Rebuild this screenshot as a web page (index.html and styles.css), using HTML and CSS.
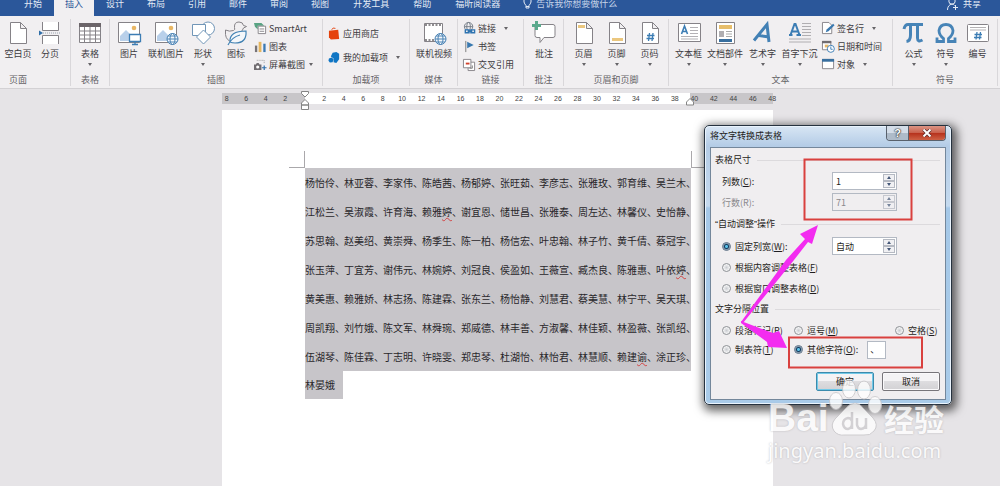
FILE: index.html
```html
<!DOCTYPE html>
<html lang="zh-CN">
<head>
<meta charset="utf-8">
<title>将文字转换成表格</title>
<link rel="stylesheet" href="styles.css">
</head>
<body>
<div class="app">
<nav class="tabs">
  <button class="tab">开始</button><button class="tab active">插入</button><button class="tab">设计</button><button class="tab">布局</button><button class="tab">引用</button><button class="tab">邮件</button><button class="tab">审阅</button><button class="tab">视图</button><button class="tab wide">开发工具</button><button class="tab">帮助</button><button class="tab wide">福昕阅读器</button>
  <button class="tell"><svg width="9" height="12" viewBox="0 0 9 12"><path d="M1 1v3q.5 2 2 3.500v2.500h3V7.500Q7.500 6 8 4V1M3 8.500h3" class="ln-w"/></svg>告诉我你想要做什么</button>
  <button class="share"><svg width="13" height="13" viewBox="0 0 13 13"><circle cx="6" cy="3" r="3.200" class="ln-w"/><path d="M1.500 12q0-5 4.500-6 2 .5 2.500 1.500M7 9.500h5M9.500 7v5" class="ln-w"/></svg>共享</button>
</nav>

<div class="ribbon">
  <section class="group first">
    <div class="tools">
      <button class="big w36"><svg class="ic" viewBox="0 0 24 24"><path d="M4.500 1.500h10l6 6v15h-16zM14.500 1.500v6h6" class="pg"/></svg><span>空白页</span></button>
      <button class="big w28"><svg class="ic" viewBox="0 0 24 24"><path d="M4.500 1v8.500h16V1M4.500 23v-8.500h16V23" class="pg"/><path d="M1 9.500v5l4-2.500z" fill="#2f6ea8"/><path d="M5 12h17" stroke="#9aa4b0" stroke-dasharray="1 1"/></svg><span>分页</span></button>
    </div>
    <h2>页面</h2>
  </section>
  <section class="group">
    <div class="tools">
      <button class="big w36"><svg class="ic" viewBox="0 0 24 24"><path d="M1.500 2.500h21v19h-21zM1.500 10h21M1.500 14h21M1.500 18h21M6.500 6v15M12 6v15M17.500 6v15" class="pg"/><path d="M1 2h22v4H1z" fill="#6b6569"/></svg><span>表格</span><i class="caret"></i></button>
    </div>
    <h2>表格</h2>
  </section>
  <section class="group">
    <div class="tools">
      <button class="big w36"><svg class="ic" viewBox="0 0 24 24"><path d="M1.500 1.500h21v20h-21z" class="pg"/><path d="M3 20v-5l6-6 5 5v6z" fill="#b9d0ea"/><circle cx="17" cy="7" r="2.300" fill="#e9b765"/><path d="M12.500 13.500h11v7h-11zM18 21v2M15 23.500h6" fill="#fff" stroke="#3c7db4" stroke-width="1.300"/></svg><span>图片</span></button>
      <button class="big w38"><svg class="ic" viewBox="0 0 24 24"><path d="M1.500 1.500h21v20h-21z" class="pg"/><path d="M3 20v-5l6-6 5 5v6z" fill="#b9d0ea"/><circle cx="17" cy="7" r="2.300" fill="#e9b765"/><g class="globe"><circle cx="18.500" cy="18" r="5.500"/><ellipse cx="18.500" cy="18" rx="2.500" ry="5.500"/><path d="M13 18h11M14 15h9M14 21h9"/></g></svg><span>联机图片</span></button>
      <button class="big w36"><svg class="ic" viewBox="0 0 24 24"><circle cx="17" cy="7.500" r="6.500" class="bl"/><path d="M1.500 3.500h13v11h-13z" class="bl"/><path d="M12.500 9l7 7-7 7-7-7z" class="bl"/></svg><span>形状</span><i class="caret"></i></button>
      <button class="big w30"><svg class="ic" viewBox="0 0 24 24"><path d="M1.500 9q4 2 8 .5 2-.8 1-3Q10 1 15 1q4 0 4.500 3.500l3 1-3 1.500q-1 2-2 3.500 4 1 3.500 6-1 4-5 5H9q-7-2-7.500-8z" class="pgn"/><path d="M6 21Q5 10 22 10q1 12-11 12-3 0-5-1zm-2 3q4-8 12-10" fill="#f4f7fa" stroke="#4283b4" stroke-width="1.200"/></svg><span>图标</span></button>
      <div class="stack">
        <button class="small"><svg class="si" viewBox="0 0 14 14"><path d="M0 1h8l3 3H4v4L1 5z" fill="#58a383"/><path d="M4.500 4.500h8v8h-8zM6 7.500h5M6 10h5" class="pg"/></svg>SmartArt</button>
        <button class="small"><svg class="si" viewBox="0 0 14 14"><path d="M1 6h2.500v7H1z" fill="#787478"/><path d="M5 2h3v11H5z" fill="#e5b55d"/><path d="M10 4h2.500v9H10z" fill="#3b79b3"/></svg>图表</button>
        <button class="small"><svg class="si" viewBox="0 0 14 14"><path d="M3 2.500h8v4" fill="none" stroke="#999" stroke-dasharray="1 1"/><path d="M0 7h2l1-1.500h2L6 7h2v6H0z" fill="#716d71"/><circle cx="4" cy="9.700" r="1.700" fill="#fff"/><path d="M11 8v5M8.500 10.500h5" stroke="#2f70ac" stroke-width="1.300"/></svg>屏幕截图<i class="caret"></i></button>
      </div>
    </div>
    <h2>插图</h2>
  </section>
  <section class="group">
    <div class="tools">
      <div class="stack two">
        <button class="small"><svg class="si" viewBox="0 0 14 14"><path d="M1 4l10-1 1 10-9 .5L1 11z" fill="#e5420d"/><path d="M4 3q1-3 4-1.500" stroke="#e5420d" fill="none"/></svg>应用商店</button>
        <button class="small"><svg class="si" viewBox="0 0 14 14"><path d="M5 2l4-1 3 2v6l-3 4-3-1V8L3 6z" fill="#0f75c4"/><path d="M1 8l3-1 2 2-1 3-3 .5-1.500-2z" fill="#0f75c4"/></svg>我的加载项<i class="caret far"></i></button>
      </div>
    </div>
    <h2>加载项</h2>
  </section>
  <section class="group">
    <div class="tools center">
      <button class="big w38"><svg class="ic" viewBox="0 0 24 24"><path d="M2.500 2.500h18v18h-18z" class="pg"/><path d="M3 4h17M3 19h17" stroke="#6b676b" stroke-width="1.500" stroke-dasharray="2 1.500"/><g class="globe"><circle cx="18.500" cy="18" r="5.500"/><ellipse cx="18.500" cy="18" rx="2.500" ry="5.500"/><path d="M13 18h11M14 15h9M14 21h9"/></g></svg><span>联机视频</span></button>
    </div>
    <h2>媒体</h2>
  </section>
  <section class="group">
    <div class="tools">
      <div class="stack links">
        <button class="small"><svg class="si" viewBox="0 0 14 14"><g fill="none" stroke="#737b85"><circle cx="6" cy="5" r="4.500"/><ellipse cx="6" cy="5" rx="2" ry="4.500"/><path d="M1.500 5h9"/></g><path d="M2.500 8.500h4v3h-4zM8.500 8.500h4v3h-4zM5 10h5" fill="#f1eff1" stroke="#2e73b0" stroke-width="1.500"/></svg>链接<i class="caret far"></i></button>
        <button class="small"><svg class="si" viewBox="0 0 14 14"><path d="M3 1v12" stroke="#777"/><path d="M4.500 2l7 3.500-7 3.500z" fill="#3978af"/></svg>书签</button>
        <button class="small"><svg class="si" viewBox="0 0 14 14"><path d="M5.500 4.500h7v9h-7z" class="pg"/><path d="M.5 1.500h8v9h-8z" class="pg"/><path d="M3 5h4v2H3z" fill="#d1412c"/><path d="M10 8v3H7" stroke="#777" fill="none"/></svg>交叉引用</button>
      </div>
    </div>
    <h2>链接</h2>
  </section>
  <section class="group">
    <div class="tools center">
      <button class="big w36"><svg class="ic" viewBox="0 0 24 24"><path d="M4 3.500h17q2 0 2 2v9q0 2-2 2H12l-4 5v-5H5q-2 0-2-2v-9" class="pg"/><path d="M4.500 0v9M0 4.500h9" stroke="#5ba98d" stroke-width="3"/></svg><span>批注</span></button>
    </div>
    <h2>批注</h2>
  </section>
  <section class="group">
    <div class="tools center">
      <button class="big w33"><svg class="ic" viewBox="0 0 24 24"><path d="M4.500 1.500h10l6 6v15h-16zM14.500 1.500v6h6" class="pg"/><path d="M6 4h7v3H6z" fill="#ebc77f"/></svg><span>页眉</span><i class="caret"></i></button>
      <button class="big w33"><svg class="ic" viewBox="0 0 24 24"><path d="M4.500 1.500h10l6 6v15h-16zM14.500 1.500v6h6" class="pg"/><path d="M7 17h11v3H7z" fill="#ebc77f"/></svg><span>页脚</span><i class="caret"></i></button>
      <button class="big w33"><svg class="ic" viewBox="0 0 24 24"><path d="M4.500 1.500h10l6 6v15h-16zM14.500 1.500v6h6" class="pg"/><path d="M11.500 12l-1 8M15 12l-1 8M9 14.500h7.500M8.500 17.500H16" class="hash"/></svg><span>页码</span><i class="caret"></i></button>
    </div>
    <h2>页眉和页脚</h2>
  </section>
  <section class="group text">
    <div class="tools">
      <button class="big w33"><svg class="ic" viewBox="0 0 24 24"><path d="M1.500 2.500h22v18h-22z" class="pg"/><path d="M4.500 13l3-8 3 8M5.500 10.500h4" fill="none" stroke="#3c7db4" stroke-width="1.600"/><path d="M13 6.500h8M13 9.500h8M13 12.500h8M4 15.500h17M4 18h17" stroke="#b3b1b5"/></svg><span>文本框</span><i class="caret"></i></button>
      <button class="big w40"><svg class="ic" viewBox="0 0 24 24"><path d="M3.500 1.500h18v21h-18z" class="pg"/><path d="M6 4h13v4H6z" fill="#e7be6b"/><path d="M6 10h5v6H6z" fill="#b0aeb1"/><path d="M13 10.500h6M13 13h6M13 15.500h6" stroke="#aaa"/><path d="M6 18h13v3H6z" fill="#386f9f"/></svg><span>文档部件</span><i class="caret"></i></button>
      <button class="big w35"><svg class="ic" viewBox="0 0 24 24"><path d="M3 19.500L16 3.500 18 21M8 14.500l10 1.500" fill="none" stroke="#4381b5" stroke-width="3"/></svg><span>艺术字</span><i class="caret"></i></button>
      <button class="big w39"><svg class="ic" viewBox="0 0 24 24"><path d="M1 14h3.500M8.500 14H13M2.500 14l4-11h1l4 11M4 10.500h6" fill="none" stroke="#3c7db4" stroke-width="2"/><path d="M14 2.500h9M14 5.500h9M14 8.500h9M14 11.500h9M14 14.500h9M1 18h22M1 21h22" stroke="#b0aeb1"/></svg><span>首字下沉</span><i class="caret"></i></button>
      <div class="stack">
        <button class="small"><svg class="si" viewBox="0 0 14 14"><path d="M.5.5h7l3 3v9h-10z" class="pg"/><path d="M4 11l1-3 7-6 1.500 1.500L7 10z" fill="#3978af"/></svg>签名行<i class="caret far"></i></button>
        <button class="small"><svg class="si" viewBox="0 0 14 14"><path d="M.5 1.500h9v9h-9z" class="pg"/><path d="M0 1h10v2.500H0z" fill="#706c70"/><path d="M3 5h4v3H3z" fill="#e9b765"/><circle cx="9.500" cy="9.500" r="3.800" fill="#fff" stroke="#3c7db4"/><path d="M9.500 7v3h2" fill="none" stroke="#3c7db4"/></svg>日期和时间</button>
        <button class="small"><svg class="si" viewBox="0 0 14 14"><path d="M.5 1.500h12v10H.5z" class="pg"/><path d="M0 1h13v3H0z" fill="#386f9f"/></svg>对象<i class="caret far"></i></button>
      </div>
    </div>
    <h2>文本</h2>
  </section>
  <section class="group">
    <div class="tools center">
      <button class="big w32"><svg class="ic" viewBox="0 0 24 24"><path d="M2 8q1-4.500 4-4.500h15" fill="none" stroke="#4784b7" stroke-width="3"/><path d="M8.500 5v9q0 6-4 6.500M15.500 5v12q0 4.500 5 2" fill="none" stroke="#4784b7" stroke-width="3"/></svg><span>公式</span><i class="caret"></i></button>
      <button class="big w32"><svg class="ic" viewBox="0 0 24 24"><path d="M3 16.500v4h6.500v-3Q5 14 5 9.500 6 3.500 12 3.500t7 6q0 4.500-4.500 8v3H21v-4" fill="none" stroke="#4784b7" stroke-width="2.800"/></svg><span>符号</span><i class="caret"></i></button>
      <button class="big w32"><svg class="ic" viewBox="0 0 24 24"><rect x="1.500" y="3.500" width="21" height="17" rx="1" class="pg"/><path d="M4 6.500h16M4 9h16" stroke="#b5b2b5"/><path d="M11 11l-1 7.500M14.500 11l-1 7.500M8.500 13.500H16M8 16.500h7.500" class="hash"/></svg><span>编号</span></button>
    </div>
    <h2>符号</h2>
  </section>
</div>

<main class="workspace">
  <div class="ruler">
    <div class="nums"><span>8</span><span>6</span><span>4</span><span>2</span><span></span><span>2</span><span>4</span><span>6</span><span>8</span><span>10</span><span>12</span><span>14</span><span>16</span><span>18</span><span>20</span><span>22</span><span>24</span><span>26</span><span>28</span><span>30</span><span>32</span><span>34</span><span>36</span><span>38</span><span>40</span><span>42</span><span>44</span><span>46</span><span>48</span></div>
    <svg class="mark left" width="8" height="20" viewBox="0 0 8 20"><path d="M.5.5h7v2L4 6 .5 2.500zM4 8.500l3.500 3.500v2h-7v-2zM.5 14h7v4.500h-7z" fill="#fff" stroke="#858585"/></svg>
    <svg class="mark right" width="8" height="8" viewBox="0 0 8 8"><path d="M4 .5L7.500 4v3h-7V4z" fill="#fff" stroke="#858585"/></svg>
  </div>
  <article class="page">
    <div class="corners"><i></i><i></i></div>
    <div class="selected">
      <p><span>杨怡伶、</span><span>林亚蓉、</span><span>李家伟、</span><span>陈皓茜、</span><span>杨郁婷、</span><span>张旺茹、</span><span>李彦志、</span><span>张雅玫、</span><span>郭育维、</span><span>吴兰木、</span></p>
      <p><span>江松兰、</span><span>吴淑霞、</span><span>许育海、</span><span>赖雅<em>婷</em>、</span><span>谢宜恩、</span><span>储世昌、</span><span>张雅泰、</span><span>周左达、</span><span>林馨仪、</span><span>史怡静、</span></p>
      <p><span>苏思翰、</span><span>赵美绍、</span><span>黄崇舜、</span><span>杨季生、</span><span>陈一柏、</span><span>杨信宏、</span><span>叶忠翰、</span><span>林子竹、</span><span>黄千倩、</span><span>蔡冠宇、</span></p>
      <p><span>张玉萍、</span><span>丁宜芳、</span><span>谢伟元、</span><span>林婉婷、</span><span>刘冠良、</span><span>侯盈如、</span><span>王薇宣、</span><span>臧杰良、</span><span>陈雅惠、</span><span>叶依<em>婷</em>、</span></p>
      <p><span>黄美惠、</span><span>赖雅娇、</span><span>林志扬、</span><span>陈建霖、</span><span>张东兰、</span><span>杨怡静、</span><span>刘慧君、</span><span>蔡美慧、</span><span>林宁平、</span><span>吴天琪、</span></p>
      <p><span>周凯翔、</span><span>刘竹娥、</span><span>陈文军、</span><span>林舜琬、</span><span>郑威德、</span><span>林丰善、</span><span>方淑馨、</span><span>林佳颖、</span><span>林盈薇、</span><span>张凯绍、</span></p>
      <p><span>伍湖琴、</span><span>陈佳霖、</span><span>丁志明、</span><span>许晓雯、</span><span>郑忠琴、</span><span>杜湖怡、</span><span>林怡君、</span><span>林慧顺、</span><span>赖建<em>谕</em>、</span><span>涂正珍、</span></p>
    </div>
    <p class="last">林晏娥</p>
  </article>
</main>
</div>

<form class="dialog" onsubmit="return false">
  <header><h1>将文字转换成表格</h1>
    <div class="winbtns"><button class="help" type="button">?</button><button class="close" type="button" aria-label="关闭"><svg width="10" height="8" viewBox="0 0 10 8"><path d="M1.500.5l7 7M8.500.5l-7 7" stroke="#5d2c2c" stroke-width="3.400"/><path d="M1.500.5l7 7M8.500.5l-7 7" stroke="#fff" stroke-width="2"/></svg></button></div>
  </header>
  <div class="client">
    <h3>表格尺寸</h3>
    <div class="field"><label for="cols">列数(<u>C</u>):</label><div class="spin"><input id="cols" value="1"><button type="button" aria-label="增加"></button><button type="button" class="down" aria-label="减少"></button></div></div>
    <div class="field off"><label for="rows">行数(R):</label><div class="spin"><input id="rows" value="71" disabled><button type="button" aria-label="增加"></button><button type="button" class="down" aria-label="减少"></button></div></div>
    <h3 class="tall">“自动调整”操作</h3>
    <div class="field"><label class="radio"><input type="radio" name="fit" checked><span>固定列宽(<u>W</u>):</span></label><div class="spin"><input aria-label="列宽" value="自动"><button type="button" aria-label="增加"></button><button type="button" class="down" aria-label="减少"></button></div></div>
    <label class="radio line high"><input type="radio" name="fit"><span>根据内容调整表格(<u>F</u>)</span></label>
    <label class="radio line"><input type="radio" name="fit"><span>根据窗口调整表格(<u>D</u>)</span></label>
    <h3>文字分隔位置</h3>
    <div class="options"><label class="radio"><input type="radio" name="sep"><span>段落标记(<u>P</u>)</span></label><label class="radio"><input type="radio" name="sep"><span>逗号(<u>M</u>)</span></label><label class="radio"><input type="radio" name="sep"><span>空格(<u>S</u>)</span></label></div>
    <div class="options second"><label class="radio"><input type="radio" name="sep"><span>制表符(<u>T</u>)</span></label><div class="other"><label class="radio"><input type="radio" name="sep" checked><span>其他字符(<u>O</u>):</span></label><input class="char" aria-label="其他字符" value="、"></div></div>
    <div class="actions"><button type="submit" class="ok">确定</button><button type="button">取消</button></div>
  </div>
</form>

<svg class="notes" width="200" height="220" viewBox="740 155 200 220">
  <path d="M804.500 159.500h107v60h-107zM789 337.500h133v30H789z" fill="none" stroke="#d9403e" stroke-width="2"/>
  <path d="M741 322l45-62 19-21-5-5 18-9-6 19-4-2-14 18-51 63zM741 321l32 12 6-2 8 17-19-1-1-5-26-19z" fill="#f32cf0"/>
</svg>
<div class="watermark">
  <div class="brand"><b>Bai</b><svg width="56" height="58" viewBox="828 378 56 58"><g fill="#fff" stroke="#c9c7ca" stroke-width="1"><ellipse cx="836" cy="401" rx="6.500" ry="8.500"/><ellipse cx="849" cy="389" rx="6.500" ry="9"/><ellipse cx="864" cy="390" rx="6.500" ry="9"/><ellipse cx="875" cy="405" rx="6.500" ry="8.500"/><path d="M855 403q5 0 9 6l9 9q6 7 1 13-4 5-10 4H845q-7 1-11-4-4-6 1-12l10-10q5-6 10-6z"/></g><path d="M852 412v17M852 421q-1-3-4-3-5 1-5 6 1 5 5 5 4-1 4-5M857 418v7q1 4 4 4 5-1 5-5v-6 11" fill="none" stroke="#cfcdd0" stroke-width="2.500"/></svg><strong>经验</strong></div>
  <div class="url">jingyan.baidu.com</div>
</div>
</body>
</html>
```
FILE: styles.css
```css
* { box-sizing: border-box; }
body, h1, h2, h3, p { margin: 0; font-weight: 400; }
body {
  position: relative;
  font: 9px/13px "Noto Sans CJK SC", sans-serif;
  color: #3d3b3f;
  background: #e6e4e7;
}
button, input { font: inherit; color: inherit; margin: 0; padding: 0; }
button { border: 0; background: none; }
svg { display: block; flex: none; }
.app { display: flex; flex-direction: column; min-height: 100vh; overflow: hidden; }

/* tab strip */
.tabs { display: flex; align-items: flex-start; gap: 1px; height: 16px; padding: 0 11px 0 13px; background: #2b579a; color: #e4ebf5; }
.tab { height: 16px; padding: 0 11px 8px; line-height: 8px; white-space: nowrap; }
.tab.wide { padding: 0 12px 8px; }
.tab.active { background: #f1eff1; color: #2b579a; }
.tell, .share { display: flex; align-items: flex-start; gap: 4px; height: 16px; line-height: 8px; padding-left: 10px; white-space: nowrap; color: #c5d3e8; }
.tell svg, .share svg { margin-top: -2px; }
.share { margin-left: auto; color: #e4ebf5; padding-right: 8px; }
.ln-w { fill: none; stroke: #e4ebf5; }

/* ribbon */
.ribbon {
  display: grid;
  grid-template-columns: 71fr 39fr 213fr 87fr 48fr 66fr 40fr 105fr 224fr 105fr 2fr;
  height: 73px;
  background: #f1eff1;
  border-bottom: 1px solid #d3d1d4;
}
.group { display: flex; flex-direction: column; justify-content: space-between; min-width: 0; border-right: 1px solid #d9d7da; margin: 3px 0 2px; }
.group h2 { font-size: 9px; line-height: 12px; text-align: center; color: #666468; white-space: nowrap; }
.first h2 { text-align: left; padding-left: 9px; }
.tools { display: flex; align-items: flex-start; height: 54px; padding-left: 1px; }
.first .tools { padding-left: 0; }
.tools.center { justify-content: center; }
.text .tools { padding-left: 3px; }
.big { display: flex; flex: none; flex-direction: column; align-items: center; padding-top: 2px; white-space: nowrap; }
.big span { margin-top: 2px; line-height: 13px; }
.big .caret { margin-top: 3px; }
.w28 { width: 28px; } .w30 { width: 30px; } .w32 { width: 32px; } .w33 { width: 33px; }
.w35 { width: 35px; } .w36 { width: 36px; } .w38 { width: 38px; } .w39 { width: 39px; } .w40 { width: 40px; }
.ic { width: 24px; height: 24px; overflow: visible; }
.si { width: 13px; height: 13px; overflow: visible; }
.caret { width: 0; height: 0; border: 2px solid transparent; border-top: 3px solid #666468; border-bottom: 0; }
.stack { display: flex; flex-direction: column; padding-left: 3px; }
.two, .links { padding-left: 4px; }
.small { display: flex; align-items: center; gap: 2px; height: 18px; white-space: nowrap; }
.small .caret { margin-left: 2px; }
.small .caret.far { margin-left: 6px; }
.two { padding-top: 2px; }
.two .small { height: 24px; }
.pg { fill: #fff; stroke: #858287; }
.pgn { fill: none; stroke: #858287; }
.bl { fill: #fff; stroke: #7196b8; }
.globe { fill: #f4f8fc; stroke: #4c84b5; stroke-width: 1; }
.globe path, .globe ellipse { fill: none; }
.hash { fill: none; stroke: #3c7db4; stroke-width: 1.3; }

/* document area */
.workspace { display: flex; flex: 1; flex-direction: column; align-items: center; padding: 4px 5px 0 0; }
.ruler { position: relative; width: 551px; height: 11px; background: linear-gradient(90deg, #c8c6c9 83px, #fff 83px 468px, #c8c6c9 468px); }
.nums { display: grid; grid-template-columns: repeat(29, 1fr); margin: 0 -9px 0 -5px; font: 7px/11px "Liberation Sans", sans-serif; text-align: center; color: #444; }
.mark { position: absolute; top: -2px; left: 79px; }
.mark.right { top: 5px; left: 464px; }
.page { flex: 1; width: 551px; margin-top: 6px; padding: 41px 82px 0 83px; background: #fff; }
.corners { display: flex; justify-content: space-between; height: 17px; margin: 0 -16px; }
.corners i { width: 16px; border: solid #aaa8ab; border-width: 0 1px 1px 0; }
.corners i:last-child { border-width: 0 0 1px 1px; }
.selected, .last { background: #c7c5c9; color: #29272b; font-size: 10px; line-height: 29px; }
.selected p { display: grid; grid-template-columns: repeat(10, 39px); height: 29px; white-space: nowrap; }
.selected em { font-style: normal; text-decoration: underline wavy #d24545 1px; text-underline-offset: 1px; }
.last { width: 38px; line-height: 28px; }

/* dialog window */
.dialog {
  position: absolute; top: 125px; left: 704px; width: 248px;
  padding: 0 5px 4px;
  border: 1px solid #26323f; border-radius: 5px;
  background: linear-gradient(#d8e6f4, #b4cce6 20px, #c5daef 80px, #a5c8e8 82px, #a9cbe9);
  box-shadow: inset 0 0 0 1px #eaf4fd, 2px 3px 10px 3px rgba(0, 0, 0, .6);
  color: #1f1d20;
}
.dialog header { display: flex; justify-content: space-between; height: 21px; }
.dialog h1 { font-size: 9px; line-height: 20px; }
.winbtns { display: flex; height: 15px; border: 1px solid #59616c; border-top: 0; border-radius: 0 0 4px 4px; overflow: hidden; }
.help { width: 21px; font: bold 11px/13px "Liberation Sans", sans-serif; color: #fff; text-shadow: 0 0 1px #333, 0 0 1px #333, 0 0 2px #333; background: linear-gradient(#d4dde8 50%, #aebbc9 50%); }
.close { display: flex; align-items: center; justify-content: center; width: 37px; border-left: 1px solid #59616c; background: linear-gradient(#dc9585, #c9614d 48%, #b5301b 50%, #ce6145); }
.client { border: 1px solid #74879b; background: #f0eef0; padding: 0 5px 8px 4px; }
.client h3 { display: flex; align-items: center; gap: 6px; height: 24px; font: 9px/13px "Liberation Sans", "Noto Sans CJK SC", sans-serif; white-space: nowrap; }
.client h3::after { content: ""; flex: 1; border-top: 1px solid #dcdadd; }
.client h3.tall { height: 26px; }
.field { display: grid; grid-template-columns: 110px 65px; align-items: center; height: 18px; margin-left: 7px; }
.off { margin-top: 3px; color: #8a888c; }
.spin { display: grid; grid-template-columns: 1fr 12px; grid-template-rows: 7px 7px; height: 18px; padding: 1px; border: 1px solid #b3b9c3; background: #fff; }
.off .spin { background: #f0eef0; }
.spin input { grid-row: 1 / 3; min-width: 0; height: 14px; padding-left: 2px; border: 0; background: none; }
.spin button { display: grid; place-items: center; border: 1px solid #b5b9c2; background: #f0f0f3; }
.spin button::after { content: ""; border: 2px solid transparent; border-top: 0; border-bottom: 3px solid #455878; }
.spin button.down::after { transform: rotate(180deg); }
.off button { opacity: .7; }
.radio { display: flex; align-items: center; gap: 4px; white-space: nowrap; }
.radio input { flex: none; appearance: none; width: 9px; height: 9px; border: 1px solid #8d9095; border-radius: 50%; background: radial-gradient(#c9cbd0, #fff 80%); }
.radio input:checked { border-color: #5c7085; background: radial-gradient(circle, #5cc3ea 0 1px, #123c60 2px, #eef4f8 4px); }
.line { height: 18px; margin-left: 7px; }
.line.high { height: 24px; }
.options { display: grid; grid-template-columns: 72px 101px auto; align-items: center; height: 18px; margin-left: 7px; }
.options.second { grid-template-columns: 72px auto; height: 21px; }
.other { display: flex; align-items: center; gap: 9px; }
.char { width: 19px; height: 18px; padding-left: 2px; border: 1px solid #b3b9c3; background: #fff; }
.actions { display: flex; justify-content: flex-end; gap: 8px; margin-top: 12px; }
.actions button { width: 58px; height: 19px; border: 1px solid #77757a; border-radius: 2px; background: linear-gradient(#f4f3f5 50%, #dedde0 50%, #d2d1d4); box-shadow: inset 0 0 0 1px #faf9fb; }
.actions .ok { border-color: #3c8bad; box-shadow: inset 0 0 0 1px #72c9e8; }

/* overlays */
.notes { position: absolute; left: 740px; top: 155px; pointer-events: none; }
.watermark { position: absolute; left: 768px; top: 378px; pointer-events: none; color: #fff; opacity: .8; text-shadow: 0 0 2px #aaa8ab; }
.brand { display: flex; align-items: flex-end; height: 58px; }
.brand b { width: 60px; font: bold 39px/36px "Liberation Sans", sans-serif; }
.brand strong { font-size: 30px; line-height: 36px; font-weight: 700; }
.url { font: 20px/26px "Noto Sans", sans-serif; margin-top: 2px; }
```
